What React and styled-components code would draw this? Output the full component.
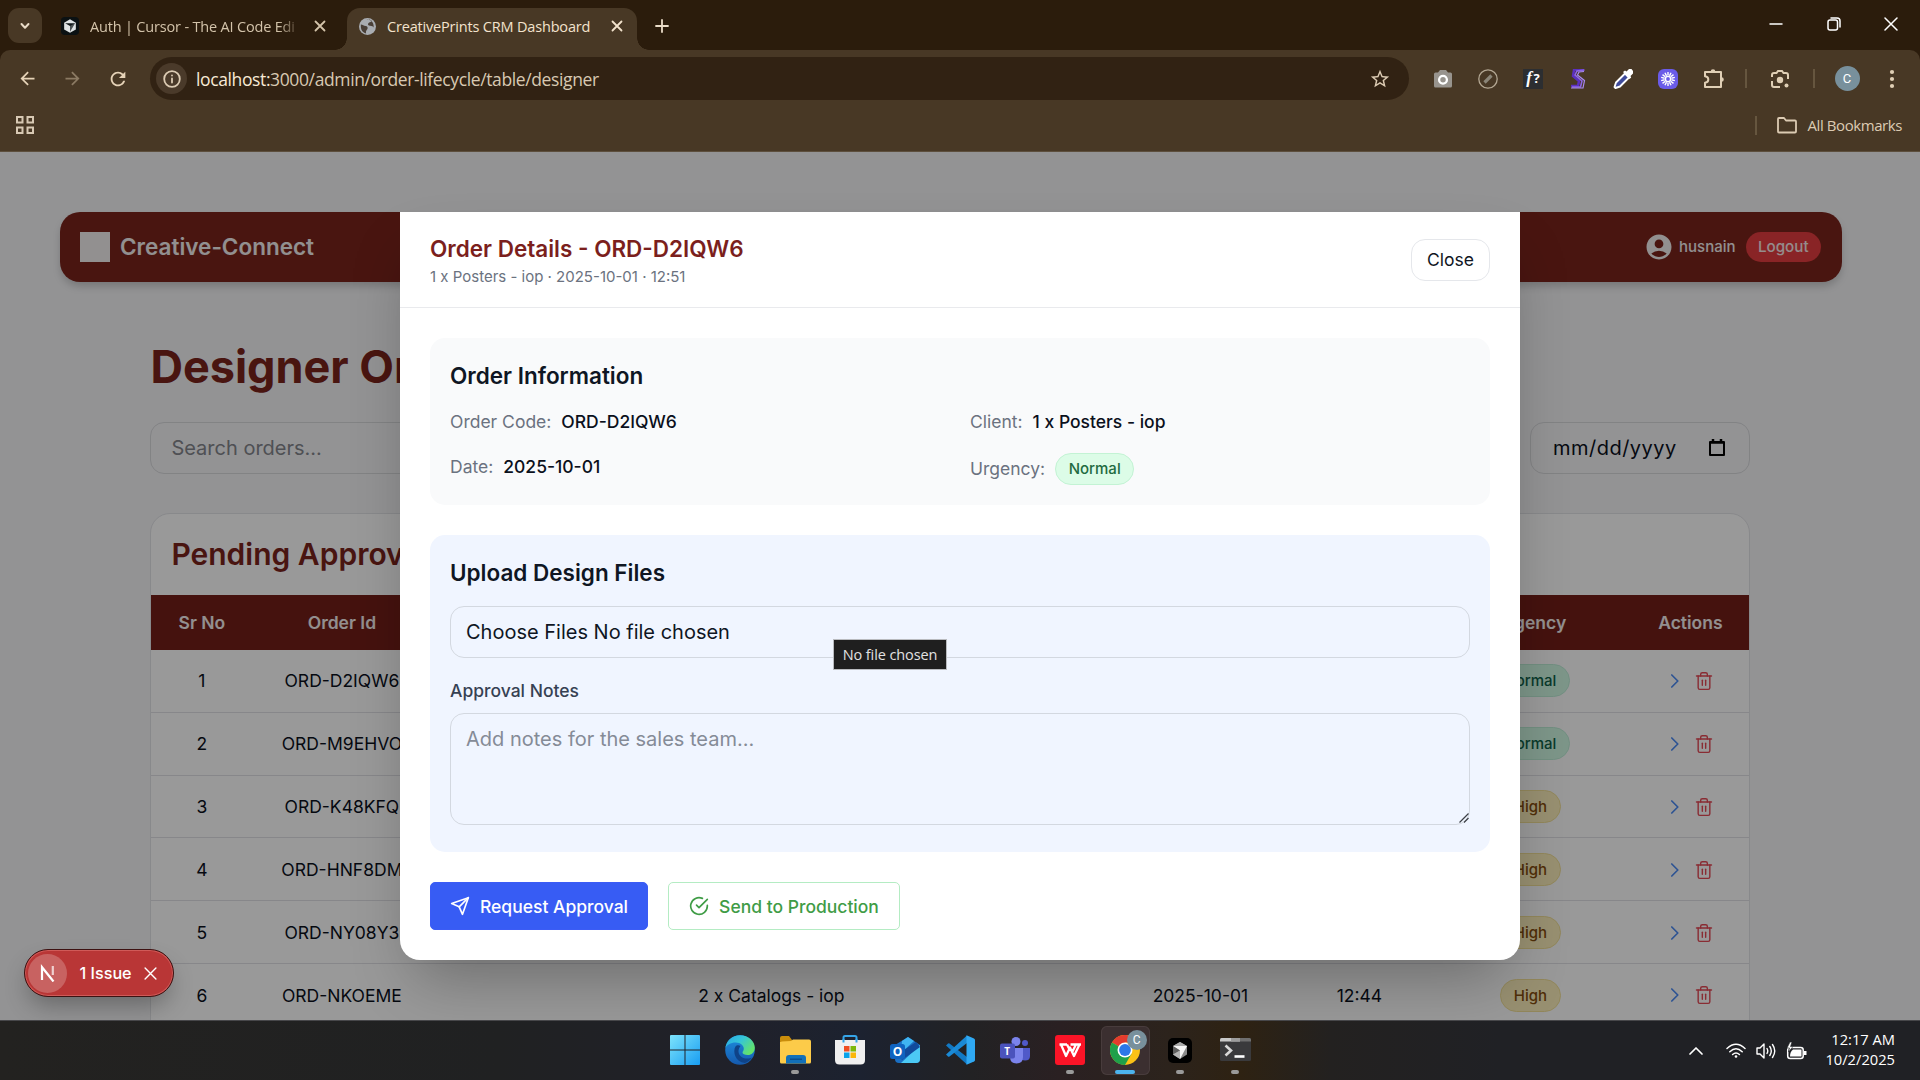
import React from 'react';
import styled, { createGlobalStyle, css } from 'styled-components';
import { FiSend, FiCheckCircle, FiTrash2 } from 'react-icons/fi';
import { MdAccountCircle, MdStarBorder, MdArrowBack, MdArrowForward, MdRefresh } from 'react-icons/md';

const ui = "'Open Sans', 'Noto Sans', sans-serif";
const inter = "Inter, 'Liberation Sans', sans-serif";

const Global = createGlobalStyle`
  * { box-sizing: border-box; }
  html, body { margin: 0; padding: 0; background: #202124; }
  svg { display: block; flex: none; }
  button, textarea { font: inherit; margin: 0; }
`;

const Screen = styled.div`
  width: 1920px;
  height: 1080px;
  overflow: hidden;
  display: flex;
  flex-direction: column;
  font-family: ${ui};
`;

/* ---------- browser chrome ---------- */
const TabStrip = styled.div`
  height: 50px;
  flex: none;
  background: #2b1c0c;
  display: flex;
  align-items: flex-end;
  padding-left: 8px;
  color: #eadcc8;
`;
const TabMenu = styled.div`
  width: 34px;
  height: 35px;
  margin-bottom: 7px;
  border-radius: 11px;
  background: #483825;
  display: flex;
  align-items: center;
  justify-content: center;
`;
const Tab = styled.div`
  height: 42px;
  display: flex;
  align-items: center;
  font-size: 14.5px;
  padding: 0 0 6px;
  ${(p) => p.$active ? css`
    width: 290px;
    margin-left: 15px;
    padding-left: 12px;
    background: #483825;
    border-radius: 13px 13px 0 0;
    color: #f3e3cd;
    position: relative;
    &::before, &::after {
      content: '';
      position: absolute;
      bottom: 0;
      width: 12px;
      height: 12px;
    }
    &::before { left: -12px; background: radial-gradient(circle at 0 0, transparent 11.5px, #483825 12px); }
    &::after { right: -12px; background: radial-gradient(circle at 100% 0, transparent 11.5px, #483825 12px); }
  ` : css`
    width: 271px;
    margin-left: 19px;
    padding-left: 0;
    color: #d3c3aa;
  `}
`;
const TabTitle = styled.span`
  width: ${(p) => p.$w}px;
  margin: 0 ${(p) => p.$after}px 0 11px;
  white-space: nowrap;
  overflow: hidden;
  letter-spacing: -0.18px;
  ${(p) => p.$fade && css`
    mask-image: linear-gradient(90deg, #000 90%, transparent 101%);
  `}
`;
const NewTab = styled.div`
  width: 20px;
  height: 42px;
  margin-left: 18px;
  padding-bottom: 6px;
  display: flex;
  align-items: center;
`;
const WindowButtons = styled.div`
  margin-left: auto;
  height: 50px;
  display: flex;
  align-items: center;
  padding-bottom: 2px;
`;
const WindowButton = styled.div`
  width: 57.5px;
  display: flex;
  justify-content: center;
  color: #fff;
`;

const ToolbarBack = styled.div`
  flex: none;
  height: 102px;
  background: #2b1c0c;
`;
const ToolbarArea = styled.div`
  height: 102px;
  background: #483825;
  border-radius: 10px 10px 0 0;
  border-bottom: 1px solid #5d4f3d;
  color: #dccbb3;
`;
const Toolbar = styled.div`
  height: 57px;
  display: flex;
  align-items: center;
  padding: 0 4px 0 5px;
`;
const NavSlot = styled.div`
  width: 45px;
  display: flex;
  justify-content: center;
  color: ${(p) => (p.$dim ? '#8b7a63' : '#e6d3b8')};
`;
const Omnibox = styled.div`
  width: 1259px;
  height: 43px;
  margin-left: 10px;
  padding: 0 18px 0 6px;
  border-radius: 22px;
  background: #312213;
  display: flex;
  align-items: center;
`;
const SiteInfo = styled.div`
  width: 31px;
  height: 31px;
  border-radius: 50%;
  background: #4a3a2a;
  display: flex;
  align-items: center;
  justify-content: center;
`;
const Url = styled.span`
  flex: 1;
  margin-left: 9px;
  font-size: 17.5px;
  letter-spacing: -0.38px;
  color: #d8c9b2;
  b { font-weight: 400; color: #f8ead6; }
`;
const Extensions = styled.div`
  display: flex;
  align-items: center;
  margin-left: 11.5px;
`;
const Slot = styled.div`
  width: ${(p) => p.$w || 45}px;
  display: flex;
  justify-content: center;
`;
const VRule = styled.div`
  width: 2px;
  height: 19px;
  background: #66563f;
`;
const FnBadge = styled.div`
  width: 20px;
  height: 20px;
  background: #2c2e31;
  color: #fff;
  font: italic 700 17px/18px 'Liberation Serif', serif;
  text-align: center;
  white-space: nowrap;
  span { margin-left: 1.5px; font: 700 13px/18px ${ui}; }
`;
const SunBadge = styled.div`
  width: 20px;
  height: 20px;
  border-radius: 6px;
  background: #6a5be8;
  display: flex;
  align-items: center;
  justify-content: center;
`;
const Avatar = styled.div`
  width: ${(p) => p.$s}px;
  height: ${(p) => p.$s}px;
  border-radius: 50%;
  background: #78909c;
  color: #fff;
  font: 400 ${(p) => p.$f}px/${(p) => p.$s}px Roboto, sans-serif;
  text-align: center;
`;
const Bookmarks = styled.div`
  height: 34px;
  display: flex;
  align-items: center;
  padding: 2px 18px 0 16px;
`;
const AllBookmarks = styled.div`
  margin-left: auto;
  display: flex;
  align-items: center;
  gap: 11px;
  font-size: 15px;
  letter-spacing: -0.42px;
  ${VRule} { margin-right: 9px; }
`;

/* ---------- page ---------- */
const Page = styled.div`
  position: relative;
  flex: none;
  height: 868px;
  overflow: hidden;
  background: #f5f5f7;
  font-family: ${inter};
  color: #0a0f1c;
`;
const Nav = styled.header`
  width: 1781.5px;
  height: 70px;
  margin: 59.5px 0 0 60px;
  padding: 0 20.5px 0 20px;
  border-radius: 20px;
  background: #7b241c;
  color: #f3f0f0;
  display: flex;
  align-items: center;
  box-shadow: 0 5px 8px -1px rgba(0,0,0,.2);
`;
const LogoBox = styled.div`
  width: 30px;
  height: 30px;
  background: #f3f0f0;
`;
const Brand = styled.span`
  flex: 1;
  margin: 0 0 0 10px;
  font-size: 22.5px;
  font-weight: 600;
`;
const UserName = styled.span`
  margin: 0 10px 0 5px;
  font-size: 15px;
  font-weight: 500;
`;
const Logout = styled.button`
  height: 30px;
  width: 75.5px;
  padding: 0;
  border: 0;
  border-radius: 15px;
  background: #e53c40;
  color: #f8e9e9;
  font-size: 15.2px;
  font-weight: 500;
`;
const Content = styled.main`
  width: 1600px;
  margin: 55.5px 0 0 150.4px;
`;
const PageTitle = styled.h1`
  margin: 0;
  height: 60px;
  font-size: 45px;
  line-height: 60px;
  font-weight: 700;
  color: #7b241c;
`;
const Filters = styled.div`
  display: flex;
  justify-content: space-between;
  margin-top: 24.5px;
`;
const FilterBox = styled.div`
  width: ${(p) => p.$w}px;
  height: 52px;
  padding: 1px ${(p) => p.$px}px 0;
  border: 1.25px solid #d9dadd;
  border-radius: 14px;
  display: flex;
  align-items: center;
  justify-content: space-between;
  font-size: 20px;
  letter-spacing: ${(p) => p.$ls || 0}px;
  color: ${(p) => p.$c};
`;
const Card = styled.section`
  width: 1600px;
  height: 900px;
  margin-top: 39.5px;
  border: 1.25px solid #e3e4e8;
  border-radius: 20px;
  background: #fff;
  overflow: hidden;
`;
const CardTitle = styled.h2`
  margin: 0;
  height: 80.8px;
  padding-left: 20px;
  font-size: 30px;
  line-height: 80px;
  font-weight: 600;
  color: #7b241c;
`;
const Row = styled.div`
  display: grid;
  grid-template-columns: 101px 179px 680px 178px 140px 202px 1fr;
  align-items: center;
  justify-items: center;
  height: 62.9px;
  padding-top: 0.5px;
  border-bottom: 1.25px solid #e1e2e6;
  font-size: 17.5px;
`;
const HeadRow = styled(Row)`
  height: 55px;
  padding-top: 0;
  border: 0;
  background: #731f18;
  color: #f5efee;
  font-weight: 600;
`;
const Pill = styled.span`
  height: ${(p) => (p.$soft ? 32 : 33)}px;
  padding: 0 12.5px;
  border-radius: 17px;
  display: inline-flex;
  align-items: center;
  font-size: 15px;
  font-weight: 500;
  ${(p) => p.$kind === 'Normal' ? css`
    background: ${p.$soft ? '#dcfce7' : '#d1fae5'};
    border: 1.25px solid ${p.$soft ? '#c3f3d4' : '#bfeed8'};
    color: ${p.$soft ? '#1f6b41' : '#0f6249'};
  ` : css`
    background: #fdf1bd;
    border: 1.25px solid #f3e198;
    color: #854d0e;
  `}
`;
const Actions = styled.div`
  display: flex;
  align-items: center;
  gap: 14px;
  padding-left: 3px;
  color: #e54a56;
`;

const Backdrop = styled.div`
  position: absolute;
  inset: 0;
  background: rgba(0,0,0,.4);
  display: flex;
  align-items: center;
  justify-content: center;
`;
const Modal = styled.div`
  width: 1120px;
  height: 747.5px;
  background: #fff;
  border-radius: 0 0 20px 20px;
  box-shadow: 0 31px 62px -15px rgba(0,0,0,.3);
  color: #0f1623;
`;
const ModalHeader = styled.div`
  height: 95.5px;
  padding: 0 30px;
  border-bottom: 1.25px solid #e9eaed;
  display: flex;
  align-items: center;
  justify-content: space-between;
`;
const ModalTitle = styled.h2`
  margin: 2px 0 0;
  font-size: 22.5px;
  line-height: 30px;
  font-weight: 600;
  color: #7b1f1d;
`;
const ModalSub = styled.p`
  margin: 2.5px 0 0;
  font-size: 15px;
  line-height: 20px;
  color: #6b7280;
`;
const CloseButton = styled.button`
  width: 79px;
  height: 42px;
  padding: 0;
  border: 1.25px solid #e5e7eb;
  border-radius: 14px;
  background: #fff;
  font-size: 17.5px;
  color: #0f1623;
`;
const ModalBody = styled.div`
  padding: 30px;
`;
const Panel = styled.section`
  height: ${(p) => p.$h}px;
  padding: 20px;
  border-radius: 15px;
  background: ${(p) => p.$bg};
  & + & { margin-top: 30px; }
`;
const PanelTitle = styled.h3`
  margin: 0 0 ${(p) => p.$mb}px;
  font-size: 22.5px;
  line-height: 35px;
  font-weight: 600;
`;
const InfoGrid = styled.div`
  display: grid;
  grid-template-columns: 1fr 1fr;
  column-gap: 20px;
  row-gap: 15px;
`;
const Field = styled.div`
  display: flex;
  align-items: ${(p) => (p.$center ? 'center' : 'flex-start')};
  gap: 10px;
  font-size: 17.5px;
  line-height: 30px;
  padding-top: ${(p) => (p.$center ? 1 : 0)}px;
  color: #6b7280;
  b { font-weight: 500; color: #0b101c; }
`;
const FileInput = styled.div`
  height: 52px;
  padding: 0 15px;
  border: 1.25px solid #d3d8e0;
  border-radius: 14px;
  font-size: 20px;
  line-height: 50.5px;
`;
const Label = styled.label`
  display: block;
  margin: 20px 0 10px;
  font-size: 17.5px;
  line-height: 25px;
  font-weight: 500;
  color: #364153;
`;
const NotesWrap = styled.div`
  position: relative;
  height: 112px;
`;
const Notes = styled.textarea`
  display: block;
  width: 100%;
  height: 112px;
  padding: 10px 15px;
  border: 1.25px solid #d3d8e0;
  border-radius: 14px;
  background: transparent;
  resize: none;
  outline: none;
  font-size: 20px;
  line-height: 30px;
  &::placeholder { color: #858b97; opacity: 1; }
`;
const ResizeGrip = styled.svg`
  position: absolute;
  right: 1.5px;
  bottom: 2px;
`;
const Footer = styled.div`
  display: flex;
  gap: 20px;
  margin-top: 30px;
`;
const ActionButton = styled.button`
  width: ${(p) => p.$w}px;
  height: 47.5px;
  padding: 0;
  border: 1.25px solid ${(p) => (p.$primary ? '#3b5cf5' : '#b4ecc3')};
  border-radius: 5px;
  background: ${(p) => (p.$primary ? '#375cf4' : '#fff')};
  color: ${(p) => (p.$primary ? '#fff' : '#3f9c46')};
  display: flex;
  align-items: center;
  justify-content: center;
  gap: 10px;
  font-size: 17.5px;
  font-weight: 500;
`;
const Tooltip = styled.div`
  position: absolute;
  left: 833px;
  top: 487px;
  width: 114px;
  height: 31px;
  border: 1px solid #b9bbbf;
  background: #1f1f1f;
  color: #e2e2e2;
  font: 400 14.5px/29px ${ui};
  text-align: center;
  white-space: nowrap;
  letter-spacing: -0.1px;
`;
const IssueBadge = styled.div`
  position: absolute;
  left: 24px;
  top: 797px;
  width: 150px;
  height: 48px;
  border-radius: 24px;
  padding: 0 16px 0 3px;
  border: 1.5px solid #3d1212;
  background: #b93636;
  box-shadow: inset 0 0 0 1px #d05a58, 0 12px 24px -4px rgba(0,0,0,.3);
  color: #fff;
  display: flex;
  align-items: center;
  gap: 12.5px;
  font-size: 16.2px;
  font-weight: 500;
  white-space: nowrap;
  > svg { margin-left: auto; }
`;
const NextMark = styled.div`
  flex: none;
  width: 39px;
  height: 39px;
  border-radius: 50%;
  background: #c86261;
  display: flex;
  align-items: center;
  justify-content: center;
`;

/* ---------- taskbar ---------- */
const Taskbar = styled.div`
  flex: none;
  height: 60px;
  border-top: 1px solid #47474a;
  background: linear-gradient(90deg, #232220 0, #202122 500px, #20212a 740px, #1c2230 860px, #222224 970px, #2a2022 1060px, #2c231c 1170px, #2e2212 1240px, #232120 1330px, #202125 1500px);
  display: flex;
  align-items: center;
  padding: 0 25px 0 660.7px;
  color: #fff;
`;
const TaskApp = styled.div`
  width: 49px;
  height: 49px;
  margin-right: 6px;
  margin-bottom: 1px;
  border-radius: 6px;
  display: flex;
  align-items: center;
  justify-content: center;
  position: relative;
  background: ${(p) => (p.$active ? '#3b2f30' : 'transparent')};
  box-shadow: ${(p) => (p.$active ? 'inset 0 0 0 1px #483c3c' : 'none')};
  &::after {
    content: '';
    position: absolute;
    bottom: 1px;
    left: 50%;
    transform: translateX(-50%);
    height: 4px;
    border-radius: 2px;
    width: ${(p) => (p.$active ? 20 : p.$run ? 8 : 0)}px;
    background: ${(p) => (p.$active ? '#4cb4ee' : '#9a9a9a')};
  }
`;
const AppBadge = styled.div`
  position: absolute;
  right: 3px;
  top: 4px;
`;
const Tray = styled.div`
  margin-left: auto;
  display: flex;
  align-items: center;
`;
const Clock = styled.div`
  margin-left: 9px;
  width: 70px;
  display: flex;
  flex-direction: column;
  align-items: flex-end;
  padding-bottom: 3px;
  font-size: 14.7px;
  line-height: 20px;
  white-space: nowrap;
`;

/* ---------- drawings ---------- */
const Line = ({ s = 16, vb = 16, w = 1.7, d, children }) => (
  <svg width={s} height={s} viewBox={`0 0 ${vb} ${vb}`} fill="none" stroke="currentColor" strokeWidth={w} strokeLinecap="round" strokeLinejoin="round">
    {d && <path d={d} />}{children}
  </svg>
);
const CloseX = ({ s = 12, w = 1.8 }) => <Line s={s} vb={12} w={w} d="M1.5 1.5l9 9M10.5 1.5l-9 9" />;

const CursorLogo = ({ s = 18, bg = '#0b1113' }) => (
  <svg width={s} height={s} viewBox="0 0 24 24">
    <rect width="24" height="24" rx="5" fill={bg} />
    <path d="M12 3l7.8 4.5v9L12 21l-7.8-4.500v-9z" fill="#dfe3e4" />
    <path d="M5.500 8.200h13.200L12 19.500V12z" fill="#11181a" />
    <path d="M12 12l6.700-3.800L12 19.500z" fill="#fff" opacity=".25" />
  </svg>
);
const Cube = () => (
  <svg width="24" height="29" viewBox="0 0 24 29">
    <rect y="2" width="24" height="25" rx="5" fill="#000" />
    <path d="M12 6l7 4v8.500L12 23l-7-4.500V10z" fill="#8b8b8b" />
    <path d="M12 6l7 4-7 4-7-4z" fill="#a8a8a8" />
    <path d="M5 10l14 0-7 13v-8.500z" fill="#f4f4f4" />
    <path d="M5 10v8.500l7-4z" fill="#5d5d5d" />
    <path d="M5 18.500L12 23v-8.500z" fill="#b4b4b4" />
  </svg>
);
const Globe = () => (
  <svg width="17" height="17" viewBox="0 0 18 18">
    <circle cx="9" cy="9" r="9" fill="#a9adb2" />
    <path d="M2 7c2 0 3 1.500 5 1.500S9.500 10 9 11.500 7 13 7.500 16.500C3.500 15.500 1.500 12 2 7zM8 1.800c2-.5 4 0 5.500 1.200-.5 1.500-2 1.500-3 2S9 7.500 10.500 8s3.500 0 5 2c.3-3.500-1-6-3.500-7.500S8.500 1 8 1.800z" fill="#4a4038" />
  </svg>
);
const Camera = () => (
  <svg width="20" height="20" viewBox="0 0 20 20">
    <path d="M1 5q0-1.500 1.500-1.500H5L7 1h6l2 2.500h2.500Q19 3.500 19 5v12q0 1.500-1.500 1.500h-15Q1 18.500 1 17z" fill="#98948e" />
    <circle cx="10" cy="10.800" r="3.900" fill="#98948e" stroke="#fff" strokeWidth="2.300" />
  </svg>
);
const SlashRing = () => (
  <svg width="20" height="20" viewBox="0 0 20 20" fill="none">
    <circle cx="10" cy="10" r="9.200" stroke="#b3a793" strokeWidth="1.300" />
    <path d="M6.500 13.500l7-7" stroke="#8b8578" strokeWidth="3.200" />
  </svg>
);
const SMark = () => (
  <svg width="16" height="20" viewBox="0 0 16 20" fill="none">
    <path d="M14 1H4L3 7l6 5-1 5H1" stroke="#5b2fc0" strokeWidth="2.500" />
    <path d="M14.500 1L7 2 5 6l7 6-1.500 6H2" stroke="#8d66e6" strokeWidth="1.600" />
    <path d="M14 2.500L9 3 7.500 6l7 5.500L13 19H1" stroke="#a98bf2" strokeWidth="1.200" />
  </svg>
);
const Dropper = () => (
  <svg width="21" height="21" viewBox="0 0 21 21" fill="none">
    <path d="M12 5.500l4 4-9 9-4.500 1.500-1-1L3 14.500z" fill="#3f4b9b" stroke="#fff" strokeWidth="1.900" strokeLinejoin="round" />
    <path d="M10 4l2-1.500 1.500 1L16 1h2.500L20 3v2.500L17.500 8l.7 1.500L16.500 11z" fill="#fff" />
  </svg>
);
const Sun = () => (
  <svg width="16" height="16" viewBox="0 0 16 16" stroke="#fff" strokeWidth="1.400" fill="none">
    <circle cx="8" cy="8" r="2.600" />
    {Array.from({ length: 14 }, (_, i) => (
      <path key={i} d="M8 1v3.500" transform={`rotate(${(i * 360) / 14} 8 8)`} />
    ))}
  </svg>
);
const Puzzle = () => (
  <svg width="22" height="22" viewBox="0 0 22 22" fill="none" stroke="#e0cfb5" strokeWidth="2">
    <path d="M2 4h16v15H2v-4.300q3.300-.4 3.300-3.200T2 8.300z" strokeLinejoin="round" />
    <path d="M7.700 3.500a2.300 2.300 0 0 1 4.600 0zM18.500 9.200a2.300 2.300 0 0 1 0 4.600z" fill="#e0cfb5" stroke="none" />
  </svg>
);
const Lens = () => (
  <svg width="20" height="20" viewBox="0 0 20 20" fill="none" stroke="#e0cfb5" strokeWidth="2">
    <path d="M2 8V6q0-2 2-2h2.500L8 2h4l1.500 2H16q2 0 2 2v4M2 12v4q0 2 2 2h6" />
    <circle cx="10" cy="11" r="3.200" fill="#e0cfb5" stroke="none" />
    <circle cx="16.500" cy="16.500" r="2" fill="#e0cfb5" stroke="none" />
  </svg>
);

const Start = () => (
  <svg width="30" height="30" viewBox="0 0 30 30">
    <defs><linearGradient id="st" x1="0" y1="0" x2="1" y2="1"><stop stopColor="#7de3fb" /><stop offset="1" stopColor="#189df2" /></linearGradient></defs>
    <path d="M1 0h13.500v14.500H0V1q0-1 1-1zM15.500 0H29q1 0 1 1v13.500H15.500zM0 15.500h14.500V30H1q-1 0-1-1zM15.500 15.500H30V29q0 1-1 1H15.500z" fill="url(#st)" />
  </svg>
);
const Edge = () => (
  <svg width="30" height="30" viewBox="0 0 30 30">
    <defs>
      <linearGradient id="e1" x1="0" y1="0" x2="1" y2=".6"><stop stopColor="#2aa7e6" /><stop offset=".5" stopColor="#35c5d8" /><stop offset="1" stopColor="#63e36b" /></linearGradient>
      <linearGradient id="e2" x1="0" y1="0" x2="0" y2="1"><stop stopColor="#1d8fe0" /><stop offset="1" stopColor="#1559ad" /></linearGradient>
    </defs>
    <circle cx="15" cy="15" r="14.800" fill="url(#e2)" />
    <path d="M.4 13C1.500 5 7.500.2 15 .2c8.500 0 14.800 6 14.800 12.500 0 4.500-3.300 7.300-7 7.300-3.200 0-5.300-1.300-5.300-2.500 0-1 1.300-1.500 1.300-4 0-2.700-3-6-8-6C5.500 7.500 1.500 10 .4 13z" fill="url(#e1)" />
    <path d="M10.500 11.500c-3 5-.5 15.500 9.500 16.500 3-1 5.500-3 7-5.500-2.500 1.500-9 2-12-2-2.500-3.500-1.500-7 .5-9.500-1.500-1-4-1-5 .5z" fill="#0f4388" />
  </svg>
);
const Folder = () => (
  <svg width="31" height="28" viewBox="0 0 31 28">
    <path d="M0 2q0-2 2-2h7l3 4v6H0z" fill="#c98d0b" />
    <path d="M0 6q0 0 2-.5L11 5l2-1.500h16q2 0 2 2V26q0 1.500-1.500 1.500h-28Q0 27.500 0 26z" fill="#fccb49" />
    <path d="M6 27.500V22q0-3 3-3h14q3 0 3 3v5.500z" fill="#1270b8" />
    <rect x="10" y="22.500" width="12" height="1.500" fill="#0a4f90" />
  </svg>
);
const Store = () => (
  <svg width="30" height="30" viewBox="0 0 30 30">
    <path d="M8.500 9V2.500q0-1.500 1.500-1.500h10q1.500 0 1.500 1.500V9" fill="none" stroke="#35a5e8" strokeWidth="2" />
    <path d="M0 5h30v20q0 4.500-4.500 4.500h-21Q0 29.500 0 25z" fill="#f0f0f0" />
    <path d="M8.500 7.500V4M21.500 7.500V4" stroke="#35a5e8" strokeWidth="2" />
    <path d="M9 11h5.500v5.500H9z" fill="#f04e22" /><path d="M15.500 11H21v5.500h-5.500z" fill="#7db80a" />
    <path d="M9 17.500h5.500V23H9z" fill="#0ba3ea" /><path d="M15.500 17.500H21V23h-5.500z" fill="#fbb70b" />
  </svg>
);
const OutlookText = styled.text`font: 700 12px 'Open Sans', sans-serif; fill: #fff;`;
const Outlook = () => (
  <svg width="31" height="28" viewBox="0 0 31 28">
    <path d="M5 9L18 1l12 8v14q0 4-4 4H9q-4 0-4-4z" fill="#1a6fc4" />
    <path d="M12 5l6-4 6 4-13 12z" fill="#3fb4f2" />
    <path d="M30 9v14q0 4-4 4H11z" fill="#4cc9f5" />
    <path d="M30 11L12 24l-4-6 18-12z" fill="#114a9c" />
    <rect x="0" y="8" width="15" height="15" rx="2.500" fill="#0f63c0" />
    <OutlookText x="2.800" y="20">O</OutlookText>
  </svg>
);
const VSCode = () => (
  <svg width="30" height="30" viewBox="0 0 30 30">
    <path d="M1 10.500l2-2q.8-.5 1.500 0L22 22v7.500z" fill="#1279c4" />
    <path d="M1 19.500l2 2q.8.500 1.500 0L22 8V.500z" fill="#1a8ad6" />
    <path d="M21.500.300L29 3.500q1 .5 1 1.500v20q0 1-1 1.500l-7.500 3.200z" fill="#2fa9f3" />
  </svg>
);
const TeamsText = styled.text`font: 700 10px 'Open Sans', sans-serif; fill: #fff;`;
const Teams = () => (
  <svg width="30" height="27" viewBox="0 0 30 27">
    <circle cx="16" cy="4.500" r="4.500" fill="#7b83eb" /><circle cx="25" cy="6" r="3" fill="#5059c9" />
    <path d="M20 11h10v8q0 4.500-5 4.500-4 0-5-3z" fill="#5059c9" />
    <path d="M10 11h13v9q0 6.500-6.500 6.500T10 20z" fill="#7b83eb" />
    <rect x="0" y="6.500" width="15" height="15" rx="2" fill="#4b53bc" />
    <TeamsText x="4.200" y="17.600">T</TeamsText>
  </svg>
);
const Wps = () => (
  <svg width="30" height="30" viewBox="0 0 30 30">
    <rect width="30" height="30" rx="3" fill="#fb1427" />
    <path d="M4.500 9.500H12M6 9.500l5 11.500 4-8.500 4 8.500 5.500-11.500M12 9.500l2.500 5M15.500 9.500H26M21 9.500l-3.500 7" fill="none" stroke="#fff" strokeWidth="2.300" strokeLinejoin="round" />
  </svg>
);
const Chrome = () => (
  <svg width="30" height="30" viewBox="0 0 30 30">
    <circle cx="15" cy="15" r="15" fill="#fbc116" />
    <path d="M15 15L2 7.500A15 15 0 0 1 28 7.500H15z" fill="#e33b2e" />
    <path d="M2 7.500A15 15 0 0 0 15 30l6.500-11.200L15 15z" fill="#1fa04a" />
    <circle cx="15" cy="15" r="7.500" fill="#fff" /><circle cx="15" cy="15" r="5.900" fill="#2c77e8" />
  </svg>
);
const Terminal = () => (
  <svg width="31" height="24" viewBox="0 0 31 24">
    <rect width="31" height="23" rx="1.500" fill="#3a3a3c" />
    <path d="M0 3.500V1.500Q0 0 1.500 0H20v3.500z" fill="#c9c9c9" /><path d="M11 0h9v3.500h-9z" fill="#9d9d9d" /><path d="M20 0h9.500Q31 0 31 1.500v2H20z" fill="#6f6f6f" />
    <path d="M5.500 7.500l5.500 5-5.500 5" fill="none" stroke="#d8d8d8" strokeWidth="2.600" /><path d="M14.500 18.500h10" stroke="#fff" strokeWidth="2.600" />
  </svg>
);

const Chevron = () => (
  <svg width="10" height="16" viewBox="0 0 10 16" fill="none" stroke="#4c8bf5" strokeWidth="1.700" strokeLinecap="round" strokeLinejoin="round"><path d="M1.800 2l6 6-6 6" /></svg>
);

const orders = [
  ['ORD-D2IQW6', '1 x Posters - iop', '12:51', 'Normal'],
  ['ORD-M9EHVO', '1 x Posters - iop', '12:50', 'Normal'],
  ['ORD-K48KFQ', '1 x Flyers - iop', '12:49', 'High'],
  ['ORD-HNF8DM', '2 x Catalogs - iop', '12:47', 'High'],
  ['ORD-NY08Y3', '2 x Catalogs - iop', '12:45', 'High'],
  ['ORD-NKOEME', '2 x Catalogs - iop', '12:44', 'High'],
];
const apps = [
  { icon: <Start /> }, { icon: <Edge /> }, { icon: <Folder />, run: true }, { icon: <Store /> },
  { icon: <Outlook /> }, { icon: <VSCode /> }, { icon: <Teams /> }, { icon: <Wps />, run: true },
  { icon: <Chrome />, active: true }, { icon: <Cube />, run: true }, { icon: <Terminal />, run: true },
];

const BrowserChrome = () => (
  <>
    <TabStrip>
      <TabMenu><Line s={12} vb={12} w={2} d="M2.500 4l3.500 3.700L9.500 4" /></TabMenu>
      <Tab>
        <CursorLogo />
        <TabTitle $w={209} $after={15} $fade>Auth | Cursor - The AI Code Edi</TabTitle>
        <CloseX />
      </Tab>
      <Tab $active>
        <Globe />
        <TabTitle $w={210} $after={14}>CreativePrints CRM Dashboard</TabTitle>
        <CloseX />
      </Tab>
      <NewTab><Line s={14} vb={14} w={1.8} d="M7 1v12M1 7h12" /></NewTab>
      <WindowButtons>
        <WindowButton><Line s={14} vb={14} w={1.5} d="M1 7h12" /></WindowButton>
        <WindowButton>
          <Line s={14} vb={14} w={1.5}><rect x="1" y="3" width="9.500" height="10" rx="2" /><path d="M4 1h6q3 0 3 3v6" /></Line>
        </WindowButton>
        <WindowButton><Line s={14} vb={14} w={1.5} d="M1 1l12 12M13 1L1 13" /></WindowButton>
      </WindowButtons>
    </TabStrip>
    <ToolbarBack>
      <ToolbarArea>
        <Toolbar>
          <NavSlot><MdArrowBack size={21} /></NavSlot>
          <NavSlot $dim><MdArrowForward size={21} /></NavSlot>
          <NavSlot><MdRefresh size={22} /></NavSlot>
          <Omnibox>
            <SiteInfo><Line s={18} vb={18} w={1.8}><circle cx="9" cy="9" r="7.800" /><path d="M9 8.500v4M9 5.300v.2" /></Line></SiteInfo>
            <Url><b>localhost:</b>3000/admin/order-lifecycle/table/designer</Url>
            <MdStarBorder size={22} />
          </Omnibox>
          <Extensions>
            <Slot><Camera /></Slot>
            <Slot><SlashRing /></Slot>
            <Slot><FnBadge>f<span>?</span></FnBadge></Slot>
            <Slot><SMark /></Slot>
            <Slot><Dropper /></Slot>
            <Slot><SunBadge><Sun /></SunBadge></Slot>
            <Slot $w={46}><Puzzle /></Slot>
            <Slot $w={18}><VRule /></Slot>
            <Slot $w={50}><Lens /></Slot>
            <Slot $w={18}><VRule /></Slot>
            <Slot $w={49}><Avatar $s={25} $f={13}>C</Avatar></Slot>
            <Slot $w={41}>
              <svg width="6" height="20" viewBox="0 0 6 20" fill="#e0cfb5"><circle cx="3" cy="3" r="2.100" /><circle cx="3" cy="10" r="2.100" /><circle cx="3" cy="17" r="2.100" /></svg>
            </Slot>
          </Extensions>
        </Toolbar>
        <Bookmarks>
          <svg width="18" height="18" viewBox="0 0 18 18" fill="none" stroke="#d8c9b4" strokeWidth="2"><path d="M1 1h5.500v5.500H1zM11.500 1H17v5.500h-5.500zM1 11.500h5.500V17H1zM11.500 11.500H17V17h-5.500z" /></svg>
          <AllBookmarks>
            <VRule />
            <svg width="20" height="17" viewBox="0 0 20 17" fill="none" stroke="currentColor" strokeWidth="1.800" strokeLinejoin="round"><path d="M1 2q0-1 1-1h5l2 2.500h9q1 0 1 1V14.500q0 1-1 1H2q-1 0-1-1z" /></svg>
            All Bookmarks
          </AllBookmarks>
        </Bookmarks>
      </ToolbarArea>
    </ToolbarBack>
  </>
);

const OrderModal = () => (
  <Modal>
    <ModalHeader>
      <div>
        <ModalTitle>Order Details - ORD-D2IQW6</ModalTitle>
        <ModalSub>1 x Posters - iop · 2025-10-01 · 12:51</ModalSub>
      </div>
      <CloseButton>Close</CloseButton>
    </ModalHeader>
    <ModalBody>
      <Panel $h={167.5} $bg="#f9fafb">
        <PanelTitle $mb={14}>Order Information</PanelTitle>
        <InfoGrid>
          <Field>Order Code: <b>ORD-D2IQW6</b></Field>
          <Field>Client: <b>1 x Posters - iop</b></Field>
          <Field>Date: <b>2025-10-01</b></Field>
          <Field $center>Urgency: <Pill $kind="Normal" $soft>Normal</Pill></Field>
        </InfoGrid>
      </Panel>
      <Panel $h={317} $bg="#f0f5ff">
        <PanelTitle $mb={15.3}>Upload Design Files</PanelTitle>
        <FileInput>Choose Files No file chosen</FileInput>
        <Label>Approval Notes</Label>
        <NotesWrap>
          <Notes placeholder="Add notes for the sales team..." />
          <ResizeGrip width="10" height="10" viewBox="0 0 10 10" stroke="#3c3f45" strokeWidth="1.200"><path d="M.5 9.500l9-9M5 9.500L9.500 5" /></ResizeGrip>
        </NotesWrap>
      </Panel>
      <Footer>
        <ActionButton $w={218} $primary><FiSend size={20} />Request Approval</ActionButton>
        <ActionButton $w={232}><FiCheckCircle size={20} />Send to Production</ActionButton>
      </Footer>
    </ModalBody>
  </Modal>
);

export default function App() {
  return (
    <Screen>
      <Global />
      <BrowserChrome />
      <Page>
        <Nav>
          <LogoBox />
          <Brand>Creative-Connect</Brand>
          <MdAccountCircle size={30} />
          <UserName>husnain</UserName>
          <Logout>Logout</Logout>
        </Nav>
        <Content>
          <PageTitle>Designer Orders</PageTitle>
          <Filters>
            <FilterBox $w={500} $px={20} $c="#84868c">Search orders...</FilterBox>
            <FilterBox $w={220} $px={21.5} $ls={0.5} $c="#0a0f1c">
              mm/dd/yyyy
              <svg width="19" height="20" viewBox="0 0 19 20" fill="none" stroke="#000" strokeWidth="2"><path d="M1 4h14v13H1z" strokeLinejoin="round" /><path d="M1 4.500h14M4 1v3M12 1v3" strokeWidth="2.500" /></svg>
            </FilterBox>
          </Filters>
          <Card>
            <CardTitle>Pending Approvals</CardTitle>
            <HeadRow>
              <span>Sr No</span><span>Order Id</span><span>Client</span><span>Date</span><span>Time</span><span>Urgency</span><span>Actions</span>
            </HeadRow>
            {orders.map(([id, client, time, kind], i) => (
              <Row key={id}>
                <span>{i + 1}</span><span>{id}</span><span>{client}</span><span>2025-10-01</span><span>{time}</span>
                <Pill $kind={kind}>{kind}</Pill>
                <Actions><Chevron /><FiTrash2 size={20} strokeWidth={1.7} /></Actions>
              </Row>
            ))}
          </Card>
        </Content>
        <Backdrop><OrderModal /></Backdrop>
        <Tooltip>No file chosen</Tooltip>
        <IssueBadge>
          <NextMark>
            <svg width="16" height="18" viewBox="0 0 16 18" fill="none" stroke="#fff" strokeWidth="2.200"><path d="M2 16V3.200L13.500 17.500" /><path d="M12.800 2v9" opacity=".7" /></svg>
          </NextMark>
          1 Issue
          <Line s={13} vb={12} w={1.3} d="M1 1l10 10M11 1L1 11" />
        </IssueBadge>
      </Page>
      <Taskbar>
        {apps.map((a, i) => (
          <TaskApp key={i} $run={a.run} $active={a.active}>
            {a.icon}
            {a.active && <AppBadge><Avatar $s={20} $f={12}>C</Avatar></AppBadge>}
          </TaskApp>
        ))}
        <Tray>
          <Slot $w={40}><Line s={14} vb={14} w={1.7} d="M1 10l6-6 6 6" /></Slot>
          <Slot $w={40}>
            <svg width="20" height="16" viewBox="0 0 20 16" fill="none" stroke="#fff" strokeWidth="1.500" strokeLinecap="round"><path d="M1 5.500q9-8.500 18 0M3.800 8.700q6.200-5.800 12.400 0M6.600 11.500q3.400-3 6.800 0" /><circle cx="10" cy="13.500" r="1.300" fill="#fff" stroke="none" /></svg>
          </Slot>
          <Slot $w={20}>
            <svg width="21" height="18" viewBox="0 0 21 18" fill="none" stroke="#fff" strokeWidth="1.400" strokeLinecap="round" strokeLinejoin="round"><path d="M1 6h3l4-4v14l-4-4H1z" /><path d="M11 6.500q1.500 2.500 0 5M13.800 4.500q3 4.500 0 9M16.500 2.500q4.500 6.500 0 13" /></svg>
          </Slot>
          <Slot $w={40}>
            <svg width="21" height="18" viewBox="0 0 21 18" fill="none"><rect x="1.700" y="5.500" width="15.500" height="11" rx="2.500" stroke="#fff" strokeWidth="1.500" /><path d="M7 7.500h8.500v7H4q0-5 3-7z" fill="#fff" /><path d="M18 9h2.500v4H18z" fill="#fff" /><path d="M4 0L1 6h2.500L2.500 10 7 4.500H4.500L6 0z" fill="#fff" stroke="#202125" strokeWidth=".6" /></svg>
          </Slot>
          <Clock><span>12:17 AM</span><span>10/2/2025</span></Clock>
        </Tray>
      </Taskbar>
    </Screen>
  );
}
